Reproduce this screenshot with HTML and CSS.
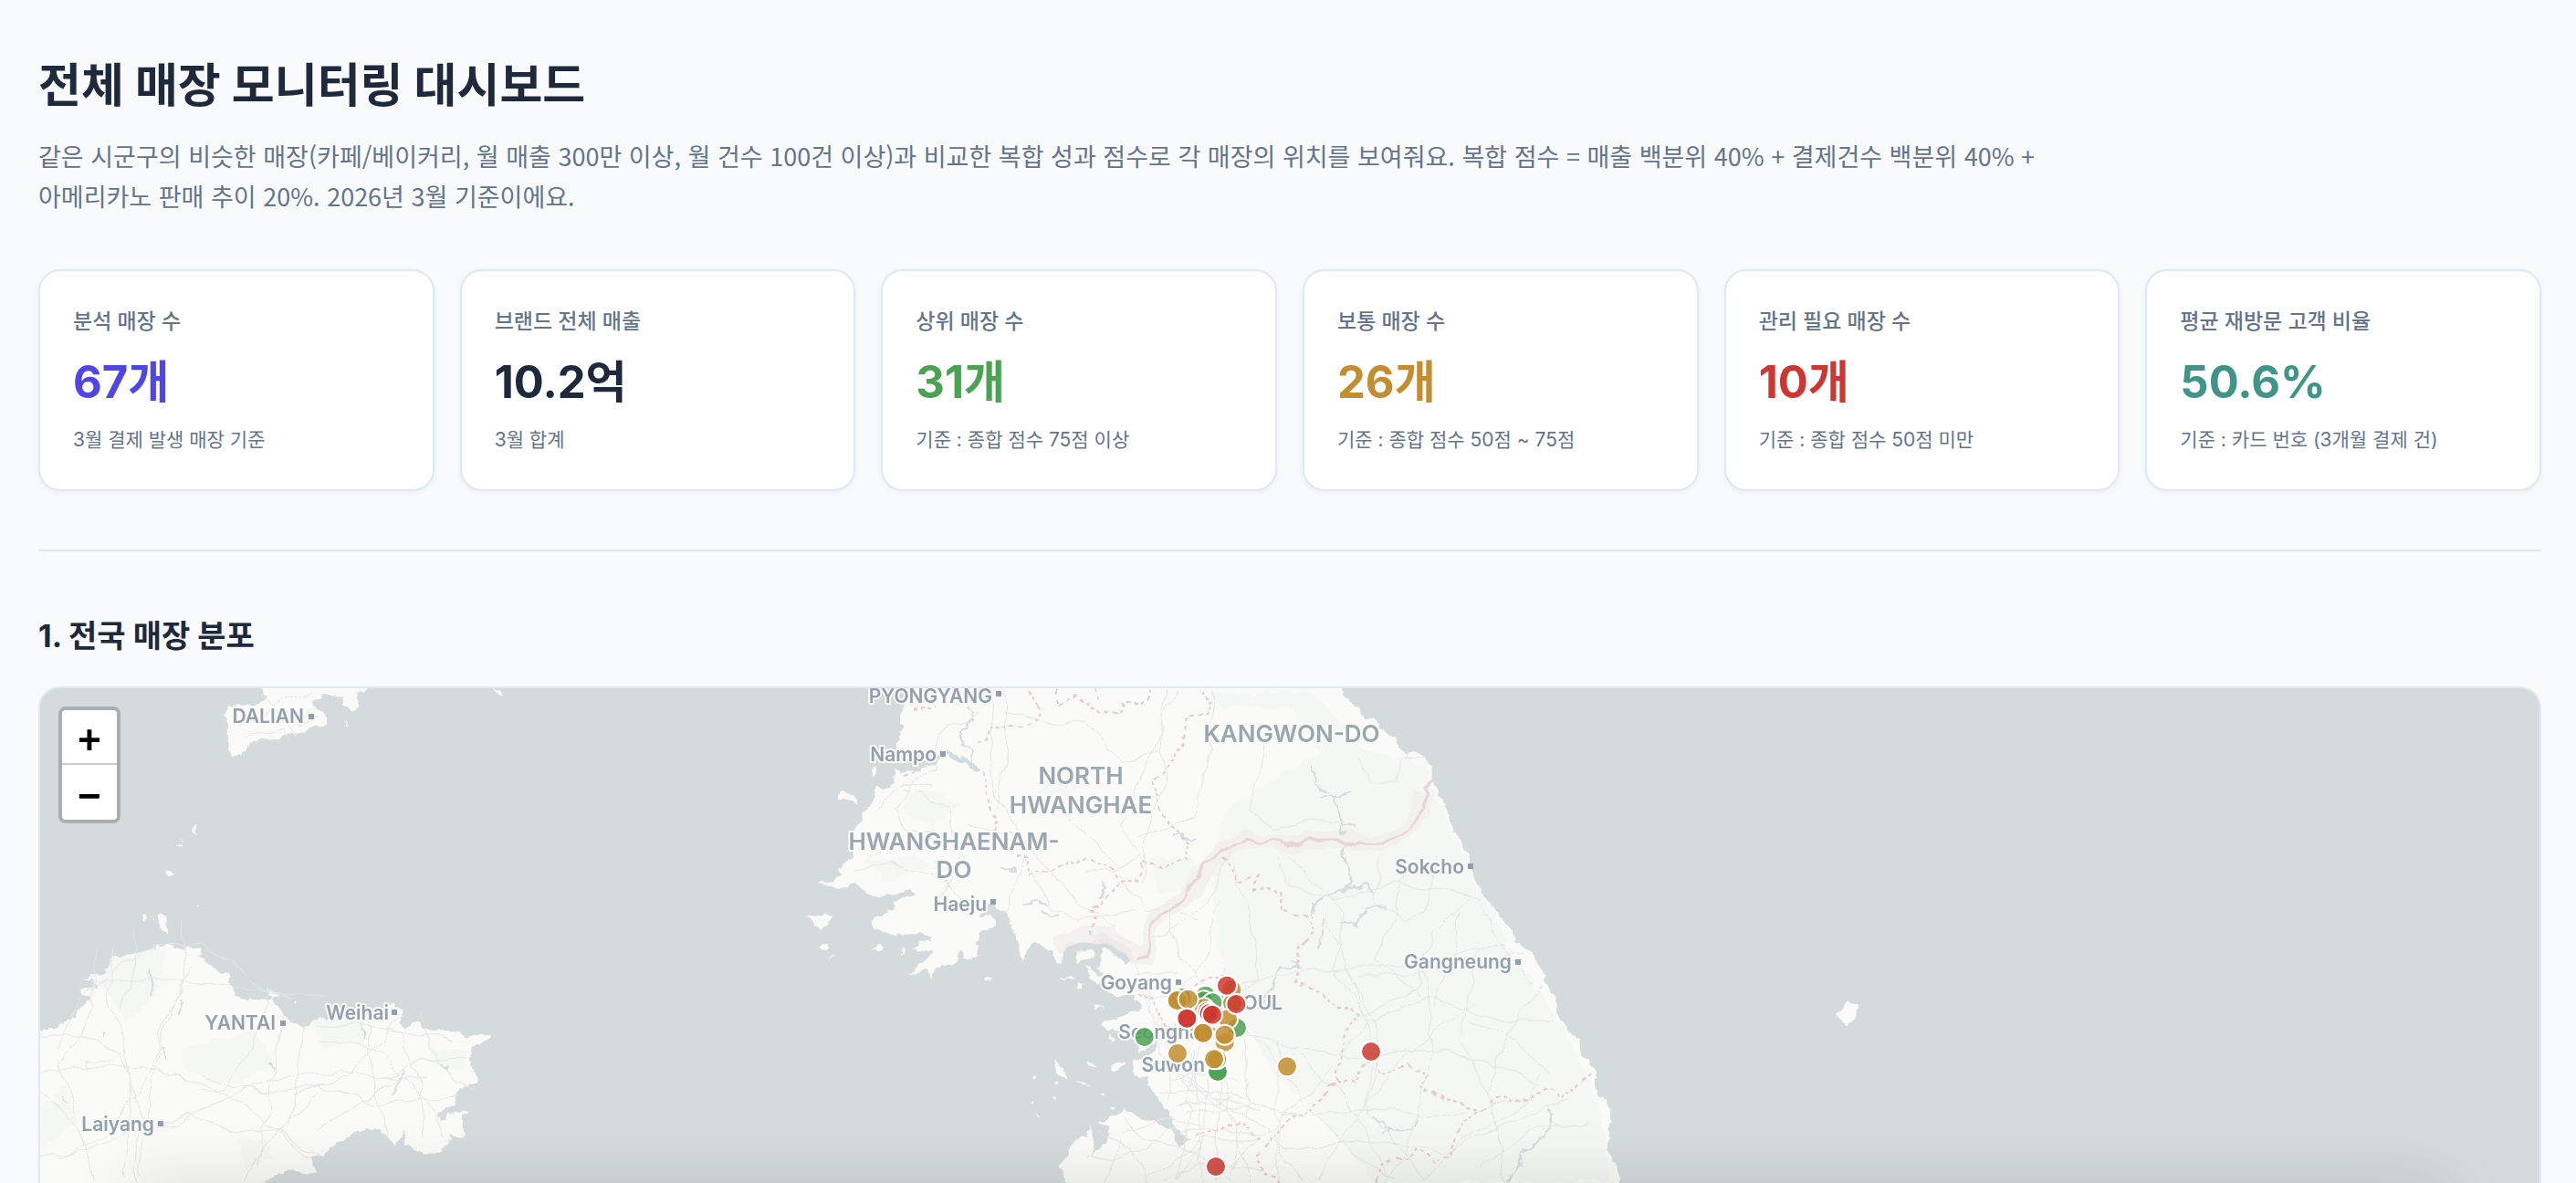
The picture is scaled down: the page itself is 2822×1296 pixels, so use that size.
FILE: index.html
```html
<!DOCTYPE html>
<html lang="ko">
<head>
<meta charset="utf-8">
<meta name="viewport" content="width=device-width, initial-scale=1">
<title>전체 매장 모니터링 대시보드</title>
<link rel="stylesheet" href="styles.css">
</head>
<body>
<main class="page">
  <header class="intro">
    <h1>전체 매장 모니터링 대시보드</h1>
    <p>같은 시군구의 비슷한 매장(카페/베이커리, 월 매출 300만 이상, 월 건수 100건 이상)과 비교한 복합 성과 점수로 각 매장의 위치를 보여줘요. 복합 점수 = 매출 백분위 40% + 결제건수 백분위 40% + 아메리카노 판매 추이 20%. 2026년 3월 기준이에요.</p>
  </header>

  <section class="cards" aria-label="요약 지표">
    <article class="card"><h3>분석 매장 수</h3><strong class="indigo">67개</strong><p>3월 결제 발생 매장 기준</p></article>
    <article class="card"><h3>브랜드 전체 매출</h3><strong>10.2억</strong><p>3월 합계</p></article>
    <article class="card"><h3>상위 매장 수</h3><strong class="green">31개</strong><p>기준 : 종합 점수 75점 이상</p></article>
    <article class="card"><h3>보통 매장 수</h3><strong class="gold">26개</strong><p>기준 : 종합 점수 50점 ~ 75점</p></article>
    <article class="card"><h3>관리 필요 매장 수</h3><strong class="red">10개</strong><p>기준 : 종합 점수 50점 미만</p></article>
    <article class="card"><h3>평균 재방문 고객 비율</h3><strong class="teal">50.6%</strong><p>기준 : 카드 번호 (3개월 결제 건)</p></article>
  </section>

  <hr>

  <section class="distribution">
    <h2>1. 전국 매장 분포</h2>
    <div class="map">
      <svg class="canvas" viewBox="44 755 2738 560" preserveAspectRatio="xMinYMin slice" role="img" aria-label="전국 매장 지도">
        <defs>
          <filter id="coast" x="30" y="740" width="2766" height="580" filterUnits="userSpaceOnUse" color-interpolation-filters="sRGB">
            <feTurbulence type="fractalNoise" baseFrequency=".07" numOctaves="3" seed="4" result="n"/>
            <feDisplacementMap in="SourceGraphic" in2="n" scale="12" xChannelSelector="R" yChannelSelector="G"/>
          </filter>
          <filter id="wobble" x="30" y="740" width="2766" height="580" filterUnits="userSpaceOnUse" color-interpolation-filters="sRGB">
            <feTurbulence type="fractalNoise" baseFrequency=".035" numOctaves="2" seed="9" result="n"/>
            <feDisplacementMap in="SourceGraphic" in2="n" scale="16" xChannelSelector="R" yChannelSelector="G"/>
          </filter>
        </defs>

        <g class="land" filter="url(#coast)">
          <g transform="translate(0 640) scale(.38265 .41837)">
            <path d="M765 250L752 292 770 300 745 312 700 322 650 325 640 350 652 372 655 430 665 453 690 456 710 425 740 412 810 402 850 398 880 375 935 373 940 350 905 330 892 310 915 292 955 290 985 300 985 320 1005 330 1025 318 1022 298 1040 285 1060 272 1060 250Z"/>
            <path d="M90 1176L160 1162 210 1135 265 1080 225 1068 275 1055 262 1035 228 1030 290 1026 335 995 410 990 455 952 490 950 525 958 530 948 570 958 572 978 600 1000 635 1018 665 1015 662 1045 672 1075 710 1088 785 1085 765 1060 805 1078 780 1082 790 1110 830 1150 870 1163 905 1142 905 1158 960 1153 1030 1148 1100 1110 1130 1100 1150 1112 1145 1150 1160 1168 1190 1152 1230 1170 1300 1175 1340 1188 1380 1172 1410 1188 1385 1200 1350 1218 1345 1260 1370 1295 1345 1318 1310 1322 1295 1370 1255 1385 1262 1410 1290 1388 1345 1383 1330 1400 1330 1448 1285 1445 1285 1470 1240 1494 1190 1490 1160 1470 1160 1430 1130 1475 1100 1450 1085 1430 1065 1425 1000 1445 960 1468 930 1492 890 1500 905 1545 880 1545 840 1538 800 1540 780 1560 700 1600 90 1600Z"/>
            <path d="M505 693l8-12 12 2-6 8zM548 655l12-20 6 6-5 18zM520 662l6 6-4 4zM475 768l4-20 16 18zM408 870l12-5 4 12-6 12zM448 862l14 2 22 40-2 12-18-16zM430 870l6 4-4 6zM565 838l8 4-6 3zM990 362l8 4-4 10zM1410 278l18 0 10 14-16-2zM330 975l10 0-6 8zM838 1098l8-2-3 6z"/>
          </g>
          <g transform="translate(860 740) scale(.33333 .3546)">
            <path d="M1510 20L410 20 390 90 375 150 385 165 370 215 378 242 440 248 505 245 500 272 440 295 390 310 355 290 360 335 320 350 290 340 300 385 265 430 220 510 218 565 170 620 140 640 103 642 170 663 225 650 250 660 290 680 350 680 400 665 435 678 410 690 350 700 355 730 300 745 280 770 300 790 330 790 360 810 400 800 460 795 480 812 420 850 490 855 410 925 470 905 485 935 500 905 555 900 575 850 590 878 628 880 640 800 690 785 690 765 670 740 640 740 680 705 720 730 750 780 755 800 783 880 795 850 840 835 880 855 895 890 920 890 920 835 1000 820 1055 800 1075 820 1110 835 1150 870 1120 890 1055 845 1030 865 1030 920 1060 960 1060 990 1140 990 1160 1010 1165 1040 1110 1055 1040 1075 1055 1100 1110 1095 1150 1110 1170 1170 1225 1130 1215 1165 1180 1185 1140 1195 1145 1240 1195 1240 1190 1270 1215 1300 1250 1345 1270 1370 1290 1400 1330 1440 1305 1455 1295 1480 1285 1425 1265 1400 1190 1378 1120 1340 1095 1360 1020 1385 1070 1395 1060 1440 1010 1490 1015 1440 1000 1395 990 1430 950 1440 935 1480 905 1520 920 1600 1510 1600Z"/>
            <path d="M175 375l20-14 32 18 6 18-20-6-20 2-22-4zM285 290l14-4 4 14-12 16zM82 748l40-8 30 12-20 20-14 14-20-10zM118 845l20-15 4 14-12 8zM145 880l20-8-10 10zM290 850l16-16 14 6-16 16zM370 862l20-16 8 4zM955 865l20-14 42 4-20 24-40 5zM985 895l20 10 12 20 24 10-4 20-30-14-8-20zM905 930l40 4 10 14-24-6zM965 948l14 10-2 12-10-6zM1008 1015l20 15 20-2-26 8zM1058 1110l20 20-10 6zM885 1190l14 12 40 38-12 4-36-20zM960 1254l40 10 14 8-40-8zM990 1200l38 8-16 6zM1075 1200l16-10 20 8-16 28-20-4zM888 1258l12 4-8 6zM818 1250l18-6-10 12zM872 1310l12-4-2 14zM808 1320l12-4-4 12zM828 1352l16 8-4 4zM1046 1300l8 4-4 8zM1070 1335l14 4-8 10zM665 940l18-4-8 14z"/>
          </g>
          <g transform="translate(1240 740) scale(.35714 .3546)">
            <path d="M280 20L630 20 665 85 715 122 745 155 800 190 840 250 875 235 920 285 920 330 945 360 970 430 1000 500 1030 560 1048 640 1090 700 1160 800 1225 865 1275 940 1275 965 1305 1005 1310 1060 1345 1100 1375 1135 1380 1165 1425 1225 1425 1270 1445 1310 1465 1335 1463 1465 1490 1520 1495 1600 280 1600Z"/>
          </g>
          <path d="M2012 1110l8-6 12-6 3 4-1 16-8 5-2 3-10-6z"/>
        </g>

        <g class="forest" filter="url(#coast)">
          <path d="M1330 760h110l50 60 70 20 25 60 70 140 60 90 40 90 10 76h-260l-40-50-70-70-50-90-20-140 20-60 100-60-30-50-80 0z"/>
          <path d="M1150 850l40 10-20 14-36-4zM990 872l40-6 20 20-30 18-30-10zM950 945l50-8 20 14-50 14zM1260 940l40 0 20 26-50 16z"/>
          <path d="M120 1050l60-10-10 50-30 30-30-40zM200 1150l80-20 20 40-50 20-50-20zM340 1120l50-10 14 30-50 10zM44 1210l30-20 12 40-42 30zM260 1250l30 0 10 20-30 14zM470 1150l40 0 0 24-36-6z"/>
        </g>

        <g class="halo" filter="url(#wobble)">
          <path d="M1156 1036L1194 1026 1212 1024 1244 1050 1258 1048 1263 1009 1297 985 1315 963 1340 933 1365 921 1391 923 1413 928 1430 921 1463 921 1485 922 1515 926 1543 908 1556 889 1560 870"/>
        </g>

        <g class="water" filter="url(#coast)">
          <path d="M1036 826c14 6 28 4 34 20" stroke-width="5"/>
          <path d="M1060 775l8 8-8 14-7 6 3 14 10 6-2 18M1435 840l6 20 20 14 6 20 0 20 10-2M1447 874l20 0 10-6M1466 890l4 14 18 2M1470 930l8 40-8 8M1438 1006l4-18 16-10 20-4 20-4 6 8M1470 1010l16 4 10-18 24-2M1450 1010l-6 30M1416 1055l8 6-24 0-16 40M1504 1222l14 14 26 2 10-10M1514 1244l8-6M1285 915l26 6M1210 968l-6 16M1094 950l20 6M1120 988l30 4M1140 1000l20 4M820 1280l12-8"/>
          <path d="M1696 1214l4 20-12 16-20 14-6 20-8 14M164 1060l4 20-2 10M200 1098l-6 16M268 1085l4 12M398 1120v18M440 1174l-10 26M175 1150l10 14M294 1165l8 8M68 1200l6 8M113 1130v8M482 1168l10 4"/>
        </g>

        <g class="roads" filter="url(#wobble)">
          <path d="M44 1136h50l40 20 20 70-6 70M44 1176l60-8 70 4 60 20 60 40 60 40M60 1150l30-60 70-50 60-6 30 16 40 36 30 10M104 1042v60l-20 40-20 20 20 60M124 1040l-6 50 20 60 6 60-10 80M150 1020l-4 50-10 36M198 1010l6 60-30 80-10 50-10 90M212 1060l-30 60-20 60-40 60-60 30M100 1076h110l60 6 50 10 40 0M274 1074l20 20-20 60-30 40-30 0M44 1270l50-10 50-20 50-6 50-30 70-20 60-10 40 10 50-6M180 1232l30-10 50 20 40-4 40 30M310 1110l-6 40-10 60-10 70M330 1128l-6 60-8 50M350 1120l90 10 60 10M350 1140l60 10 60 60 20 40M400 1110l8 60 10 50 6 30M440 1130l20 60 4 60M420 1184l40-20 50-6M320 1200l60-20 40-40 20-30M44 1194l40 40 20 60M96 1172v-10h30M220 1180l70 20 60-10 60 20 90-6M460 1110l10 40 30 40 20 0M350 1240l40-30 50-30M270 1296l20-40 60-60"/>
          <path d="M290 760l10 30 30 10M260 795l30-10 20-20 30-8M270 810l40-10 10 10M340 775l-10 20 20-8"/>
          <path d="M1090 757l-6 60 6 60 20 30 50 60 60 50M1104 757l-2 80-10 50M1074 775l-20 20-26 10-6 40-20 10-20 30 16 50M1100 780l60 14 30-4 40 50 40-20M1280 757l-10 50-20 40-20 60 20 30-30 20-30 0M990 865l50 20 10 50-20 50M960 890l30-30 30 4M950 940l50-30 40 6 20 30M935 955l40-8 60 20 40 40M1060 905l50 10 40 80 30 14 60-10M1100 1000l30-80M1225 950l-60-60M1225 960l30 40 30-10 30 20M1330 757l-6 70-16 70-60 20 M1386 810l-6 40-12 40 30 20 40-14 40 10M1490 830l10 30 30 0 4-30 30 2"/>
          <path d="M1290 757l-20 40 6 60-20 60-4 50M1350 930l-30 60-30 30-30 10M1350 945l20 60 10 70-40 30M1280 1000l10 50 40 40 60-20 80-10 100 0 60-12 40-4M1332 990l-10 60-30 40M1400 940l10 30 50 16 30-6 40-10 60 6 30 10M1412 940l60 60-10 60 40 60 60-30 80 30 60 0M1510 940v50l30 20 20-10 14-60M1540 960l-16 50-20 40 50 40M1600 1000l-10 50-40 20-60 0M1610 985l-40 40-20 60-60 30M1620 990l30 50 30 40M1650 1035l-60 10-20 60M1450 1000l60 130-10 90 60 76M1480 1060l20 70 0 80M1340 1060l-20 60-20 100-10 76M1330 1100l40 30 60 80 60 60 40 26M1300 1130l60 0 60 20 60 10 80-10 90 20 40 20M1360 1130l10 60-20 100M1400 1140l0 156M1420 1150l60 60 40 80M1270 1200l60-6 80 30 90-10 80 10 90-20M1290 1180l60 40 20 76M1280 1240l80 0 60 20 80-10 80 14 90-40 50-20M1560 1060l10 80-20 100-30 56M1620 1040l-20 100 30 60 20 96M1690 1080l-40 60-20 60M1690 1180l-30 40-60 30-40 46M1610 1120l50 20 40 40M1740 1230l-60 10-60 40M1440 1296l40-60 60-80 80-60M1330 1296l40-40 70-60 60-80"/>
          <path d="M1240 1070h50M1250 1090h50M1260 1070v40M1210 1030l30 30 30 70 40 30M1270 1100v60l40 40M1300 1085l-20 60 0 60M1280 1160l60 10 10 60M1280 1185l40-10 40 14M1290 1210l70-6M1320 1180v70l-30 46M1200 1240l40 20 20 36M1210 1296l20-50 50-20 40 10M1230 1220l20 30 60 10 40 36M1190 1270l60-6 40-30M1308 1150l10 146M1340 1160l-10 136M1256 1290l60-40 60 0M1276 1296l40-20 70 6M1200 1030l20 10M1330 1200l50 20M1280 1170l110 70 40 56M1296 1215l90 0"/>
        </g>

        <g class="province" filter="url(#wobble)">
          <path d="M1125 760l12 16-4 12-16 8-30 0-8 14-14 6M1076 845l4 26 6 20 6 20M1158 757v14l20-6 20 10 26 10 6-16 26 0 4-14M1200 757l4 14M1320 757l6 14-4 16-22 0-4 30-24 30-10 6 8 34 18 24 16 10-4 24-30 4-20-4-4 20-20 2-14 20-14 10-2 30M1114 940l12 0 2 20 20-4 20-10 26-4 10 8 16 4 4 14"/>
          <path d="M1341 940l8 14 10 12 14-8 0 18 30 2 4 20 20 6 10 20-12 14-6 40 20 10 30 20 20 4-16 14-4 30-4 30-30 30-36 20-20 30 10 20 14 16-10 20-50 0M1456 1190l30-2 6-24 14-2 4 16 20-4 14-6 20 14-10 10 30 12 40 10 14-8 20 0 20-6 20-4 12 10 10-14 24-14M1620 1215l-20 20-14 30-16 10-20-14-10 10-28 6-4 26M1308 1248l30-8 20-10 14 10 6 16M1003 776l10-4 14 2M990 850l14-6M1245 1092l20-2 8 24 6 24M1240 1084l8-6 20 8M1310 1080l14-12 20 0 8 12"/>
        </g>

        <g class="border" filter="url(#wobble)">
          <path d="M1244 1052L1258 1050 1263 1009 1278 1001 1297 985 1300 974 1315 963 1320 948 1340 933 1365 921 1379 925 1391 921 1413 928 1430 921 1463 921 1472 927 1485 922 1515 927 1543 910 1558 889 1561 864 1570 856"/>
        </g>

        <g class="dots">
          <path d="M338 783h6v6h-6zM307 1119h6v6h-6zM429 1107h6v6h-6zM173 1229h6v6h-6zM1091 758h6v6h-6zM1030 824h6v6h-6zM1085 986h6v6h-6zM1288 1074h6v6h-6zM1608 947h6v6h-6zM1660 1052h6v6h-6z"/>
        </g>
        <g class="city">
          <text x="333" y="793">DALIAN</text>
          <text x="302" y="1129">YANTAI</text>
          <text x="426" y="1118">Weihai</text>
          <text x="169" y="1240">Laiyang</text>
          <text x="1087" y="771">PYONGYANG</text>
          <text x="1026" y="835">Nampo</text>
          <text x="1081" y="999">Haeju</text>
          <text x="1284" y="1085">Goyang</text>
          <text x="1334" y="1139">Seongnam</text>
          <text x="1320" y="1175">Suwon</text>
          <text x="1405" y="1107">SEOUL</text>
          <text x="1604" y="958">Sokcho</text>
          <text x="1656" y="1062">Gangneung</text>
        </g>
        <g class="region">
          <text x="1184" y="860">NORTH</text>
          <text x="1184" y="892">HWANGHAE</text>
          <text x="1045" y="932">HWANGHAENAM-</text>
          <text x="1045" y="963">DO</text>
          <text x="1415" y="814">KANGWON-DO</text>
        </g>

        <g class="pins" transform="translate(1120 1000) scale(.33333)">
          <g class="good"><circle cx="401" cy="411" r="33"/><circle cx="705" cy="381" r="33"/><circle cx="642" cy="525" r="33"/><circle cx="642" cy="525" r="33"/><circle cx="524" cy="282" r="33"/><circle cx="602" cy="275" r="33"/><circle cx="596" cy="292" r="33"/><circle cx="625" cy="298" r="33"/></g>
          <g class="fair"><circle cx="688" cy="256" r="33"/><circle cx="690" cy="300" r="33"/><circle cx="675" cy="352" r="33"/><circle cx="597" cy="316" r="33"/><circle cx="510" cy="465" r="33"/><circle cx="509" cy="291" r="33"/><circle cx="509" cy="291" r="33"/><circle cx="545" cy="287" r="33"/><circle cx="594" cy="398" r="33"/><circle cx="594" cy="398" r="33"/><circle cx="665" cy="428" r="33"/><circle cx="665" cy="404" r="33"/><circle cx="640" cy="484" r="33"/><circle cx="630" cy="484" r="33"/><circle cx="870" cy="508" r="33"/></g>
          <g class="poor"><circle cx="541" cy="350" r="33"/><circle cx="541" cy="350" r="33"/><circle cx="607" cy="328" r="33"/><circle cx="614" cy="333" r="33"/><circle cx="624" cy="338" r="33"/><circle cx="672" cy="242" r="33"/><circle cx="703" cy="303" r="33"/><circle cx="1146" cy="459" r="33"/><circle cx="636" cy="837" r="33"/></g>
        </g>
      </svg>
      <div class="zoom">
        <button type="button" aria-label="확대">+</button>
        <button type="button" aria-label="축소">−</button>
      </div>
    </div>
  </section>
</main>
<div class="dock-shadow"></div>
</body>
</html>
```
FILE: styles.css
```css
* { box-sizing: border-box; }

body {
  margin: 0;
  background: #f8fafc;
  color: #1e293b;
  font-family: Inter, "Noto Sans CJK KR", sans-serif;
}

h1, h2, h3, p { margin: 0; }

.page {
  display: flex;
  flex-direction: column;
  height: 100vh;
  min-height: 1000px;
  padding: 58px 38px 0 42px;
  overflow: hidden;
}

.intro h1 {
  font-size: 51px;
  font-weight: 700;
  line-height: 72px;
}

.intro p {
  max-width: 2240px;
  margin-top: 19px;
  color: #64748b;
  font-family: "Noto Sans CJK KR", sans-serif;
  font-size: 27px;
  line-height: 44px;
  word-break: keep-all;
}

.cards {
  display: grid;
  grid-template-columns: repeat(6, 1fr);
  gap: 28px;
  margin-top: 58px;
}

.card {
  padding: 39px 36px;
  background: #fff;
  border: 2px solid #e2e8f0;
  border-radius: 24px;
  box-shadow: 0 2px 6px rgba(15, 23, 42, .05);
}

.card h3 {
  color: #64748b;
  font-size: 23px;
  font-weight: 500;
  line-height: 32px;
}

.card strong {
  display: block;
  margin: 23px 0 20px;
  font-size: 49px;
  font-weight: 700;
  line-height: 56px;
}

.card p {
  color: #64748b;
  font-size: 21px;
  line-height: 30px;
}

.indigo { color: #4f46e5; }
.green { color: #4ba253; }
.gold { color: #c28e30; }
.red { color: #cc3831; }
.teal { color: #419488; }

hr {
  width: 100%;
  margin: 64px 0 71px;
  border: 0;
  border-top: 2px solid #e2e8f0;
}

.distribution {
  display: flex;
  flex: 1;
  flex-direction: column;
  min-height: 0;
}

.distribution h2 {
  margin-bottom: 33px;
  font-size: 34px;
  font-weight: 700;
  line-height: 44px;
}

.map {
  position: relative;
  flex: 1;
  min-height: 0;
  overflow: hidden;
  background: #d5dadd;
  border: 2px solid #e2e8f0;
  border-bottom: 0;
  border-radius: 24px 24px 0 0;
}

.canvas {
  display: block;
  width: 100%;
  height: 100%;
}

.land { fill: #fafaf8; }
.forest { fill: #f5f7f5; }
.halo { fill: none; stroke: #f3efef; stroke-width: 18; stroke-linejoin: round; opacity: .8; }
.water { fill: none; stroke: #d5dadd; stroke-width: 2; stroke-linejoin: round; }
.roads { fill: none; stroke: #e4e5e6; stroke-width: 1; stroke-linejoin: round; }
.province { fill: none; stroke: #e2c9cd; stroke-width: 2; stroke-dasharray: 4 4; }
.border { fill: none; stroke: #e8d5d8; stroke-width: 3; stroke-linejoin: round; }
.dots { fill: #939fad; }

.city, .region {
  font-family: Inter, sans-serif;
  font-weight: 600;
  paint-order: stroke;
  stroke: #fafaf8;
  stroke-width: 4px;
  stroke-linejoin: round;
}

.city { fill: #939fad; font-size: 21px; text-anchor: end; }
.region { fill: #9ba7af; font-size: 26px; text-anchor: middle; }

.pins { stroke: #fff; stroke-width: 6px; fill-opacity: .85; }
.good { fill: #4ba253; }
.fair { fill: #c28e30; }
.poor { fill: #cc3831; }

.zoom {
  position: absolute;
  top: 20px;
  left: 20px;
  display: flex;
  flex-direction: column;
  border: 4px solid rgba(0, 0, 0, .2);
  border-radius: 8px;
}

.zoom button {
  width: 60px;
  height: 60px;
  padding: 14px 0 0;
  background: #fff;
  border: 0;
  border-radius: 0 0 4px 4px;
  color: #000;
  font: bold 44px/44px "Liberation Mono", monospace;
}

.zoom button:first-child {
  border-bottom: 2px solid #ccc;
  border-radius: 4px 4px 0 0;
}

.dock-shadow {
  position: fixed;
  top: 100%;
  right: 5%;
  left: 5%;
  height: 100px;
  border-radius: 24px;
  box-shadow: 0 0 70px rgba(20, 20, 10, .13);
  pointer-events: none;
}
```
